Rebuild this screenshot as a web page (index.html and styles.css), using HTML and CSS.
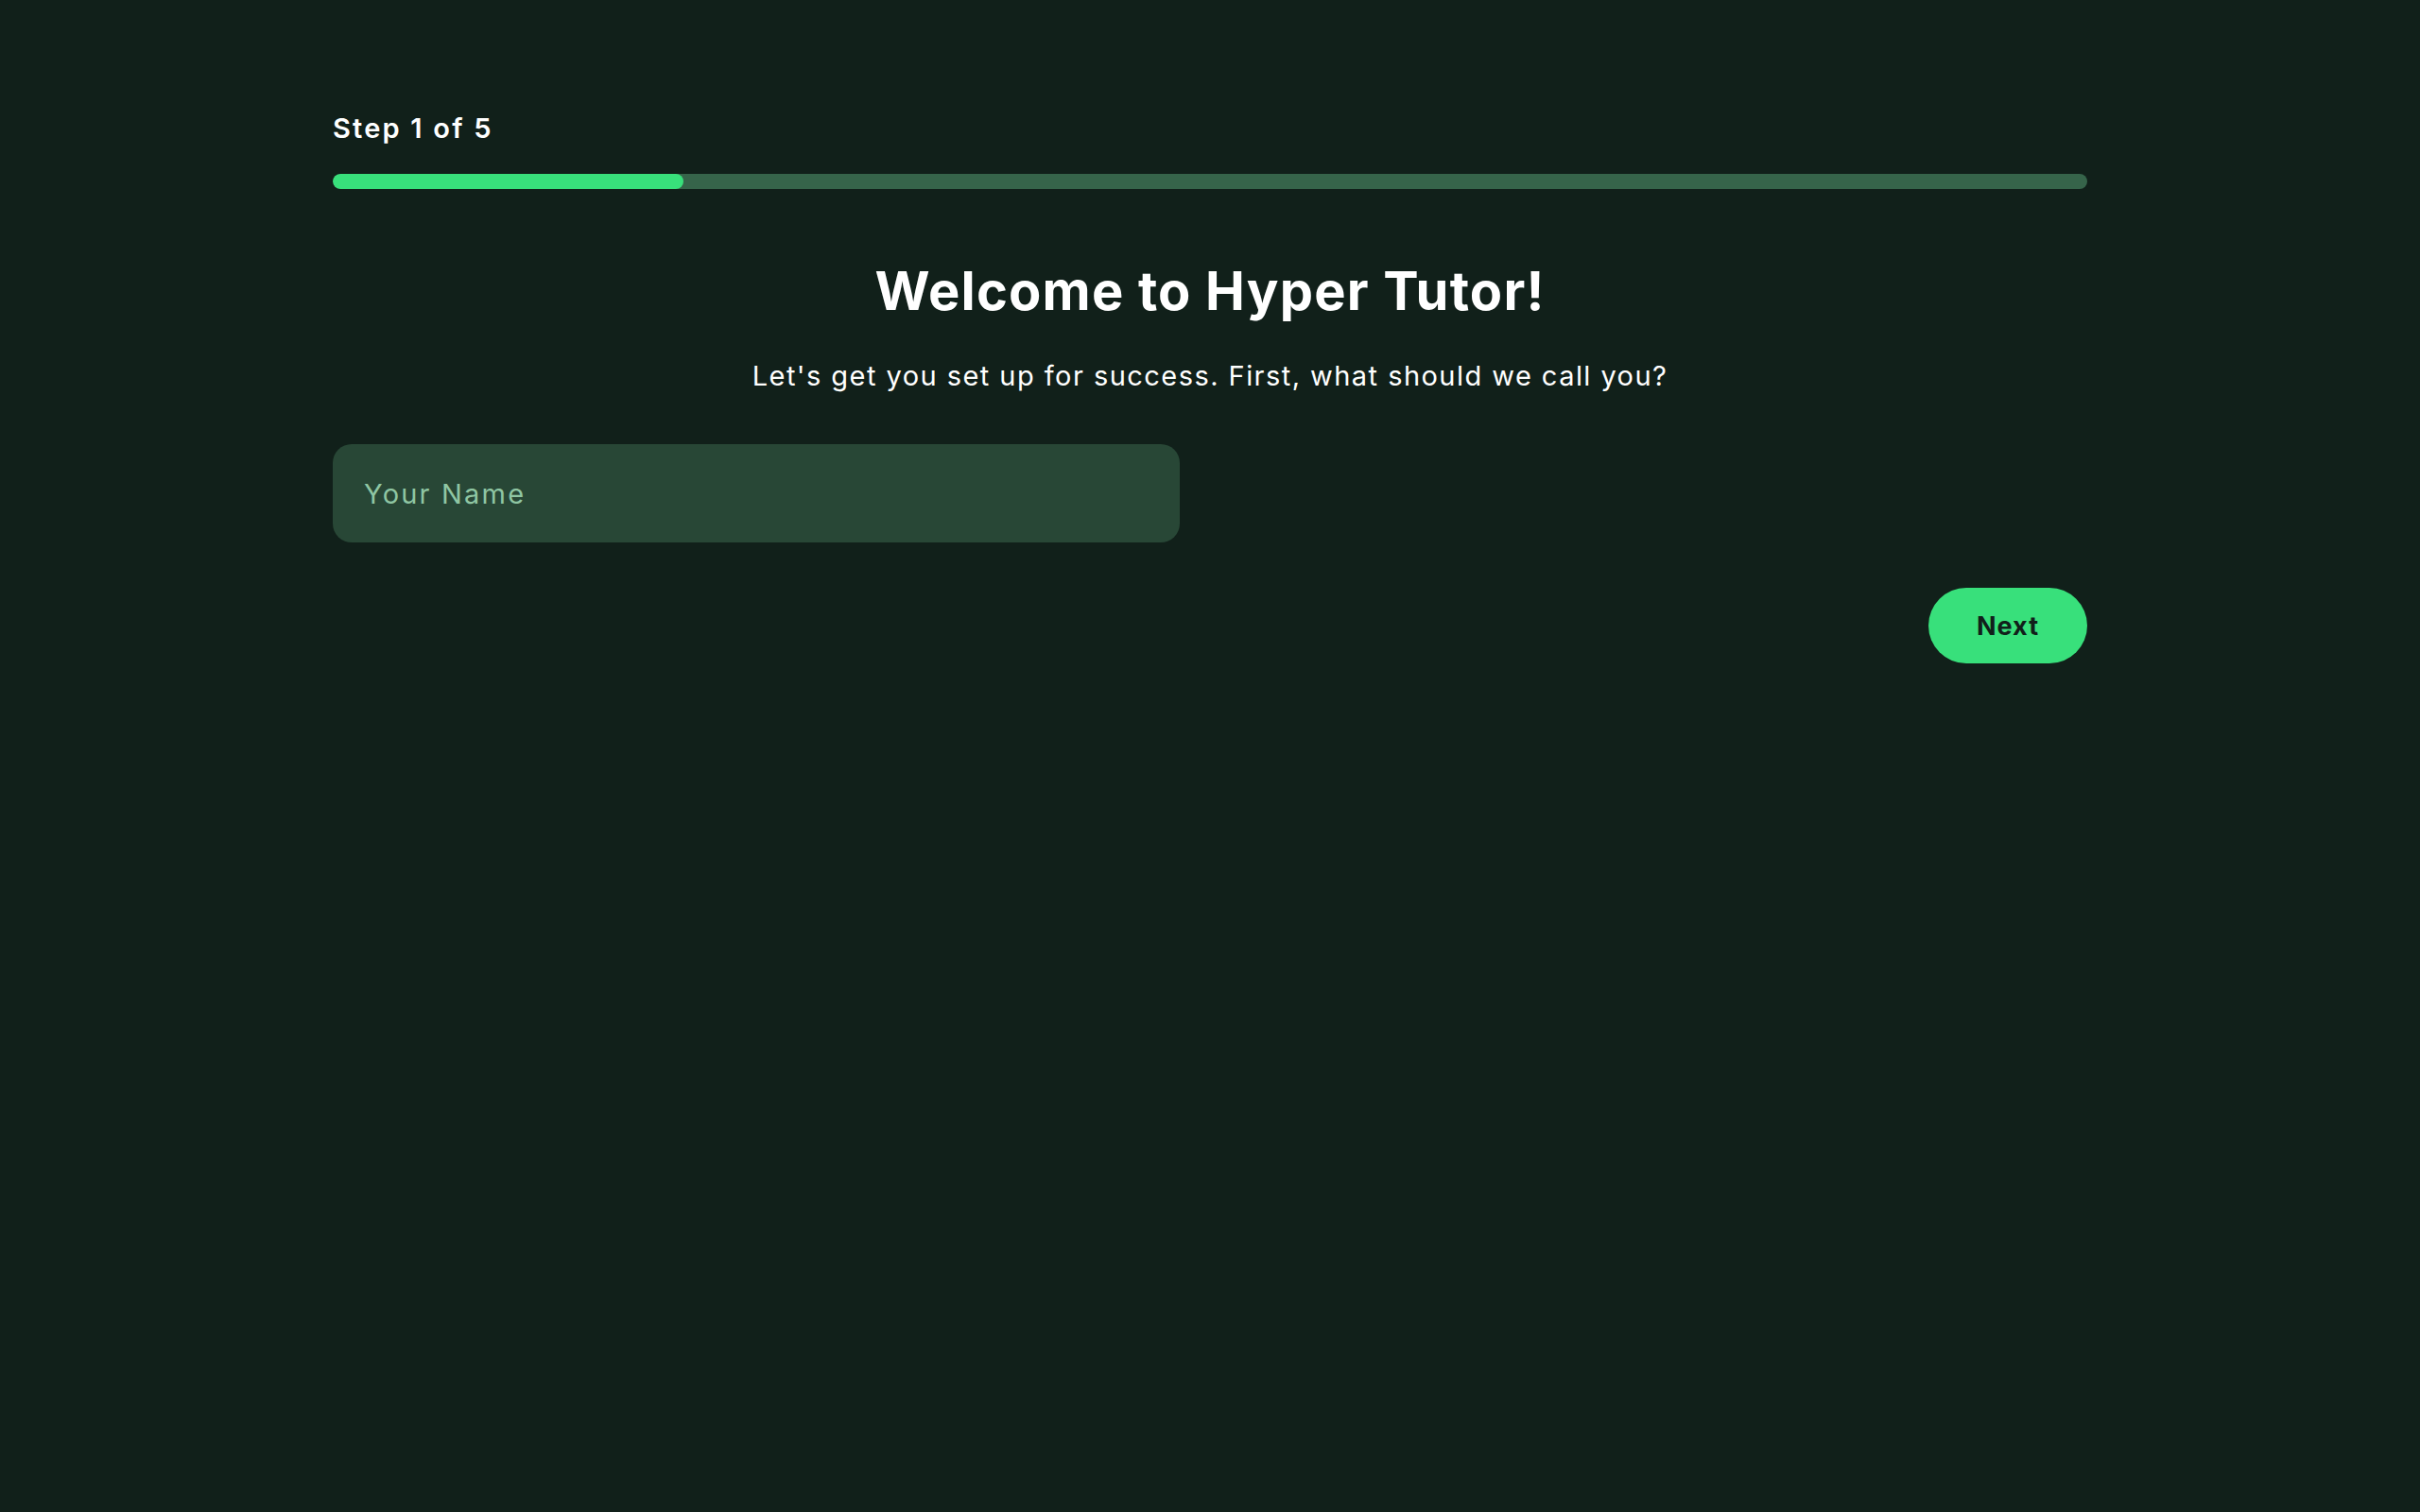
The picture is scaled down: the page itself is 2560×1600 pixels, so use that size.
FILE: index.html
```html
<!DOCTYPE html>
<html lang="en">
<head>
<meta charset="utf-8">
<title>Hyper Tutor - Onboarding</title>
<link rel="stylesheet" href="styles.css">
</head>
<body>
<main class="page">
  <div class="progress-block">
    <p class="step-label">Step 1 of 5</p>
    <div class="track"><div class="fill" style="width: 20%"></div></div>
  </div>
  <section class="intro">
    <h1 class="title">Welcome to Hyper Tutor!</h1>
    <p class="subtitle">Let's get you set up for success. First, what should we call you?</p>
  </section>
  <div class="field-row">
    <input class="name-input" type="text" placeholder="Your Name">
  </div>
  <div class="actions">
    <button class="next-btn" type="button">Next</button>
  </div>
</main>
</body>
</html>
```
FILE: styles.css
```css
html, body {
  margin: 0;
  padding: 0;
  background: #11201a;
  min-height: 100%;
}
body {
  font-family: Inter, "Noto Sans", sans-serif;
  color: #ffffff;
  min-height: 1600px;
}
.page {
  width: 1856px;
  margin: 0 auto;
  padding-top: 116px;
  display: flex;
  flex-direction: column;
}
.progress-block {
  display: flex;
  flex-direction: column;
  gap: 28px;
}
.step-label {
  margin: 0;
  font-size: 29px;
  line-height: 40px;
  font-weight: 600;
  letter-spacing: 2.2px;
}
.track {
  height: 16px;
  border-radius: 8px;
  background: #36644a;
  overflow: hidden;
}
.fill {
  height: 100%;
  border-radius: 8px;
  background: #38e07b;
}
.intro {
  margin-top: 74px;
  display: flex;
  flex-direction: column;
  align-items: center;
  gap: 36px;
}
.title {
  margin: 0;
  font-size: 56px;
  line-height: 68px;
  font-weight: 700;
  letter-spacing: 1.2px;
}
.subtitle {
  margin: 0;
  font-size: 29px;
  line-height: 40px;
  font-weight: 400;
  letter-spacing: 1.45px;
}
.field-row {
  margin-top: 52px;
}
.name-input {
  box-sizing: border-box;
  width: 896px;
  height: 104px;
  border: none;
  outline: none;
  border-radius: 20px;
  background: #284736;
  padding: 0 33px;
  font-family: inherit;
  font-size: 29px;
  letter-spacing: 2.2px;
  color: #ffffff;
}
.name-input::placeholder {
  color: #8fc6a3;
}
.actions {
  margin-top: 48px;
  display: flex;
  justify-content: flex-end;
}
.next-btn {
  width: 168px;
  height: 80px;
  border: none;
  border-radius: 40px;
  background: #38e07b;
  color: #11201a;
  font-family: inherit;
  font-size: 27px;
  font-weight: 700;
  letter-spacing: 1px;
  cursor: pointer;
}
```
